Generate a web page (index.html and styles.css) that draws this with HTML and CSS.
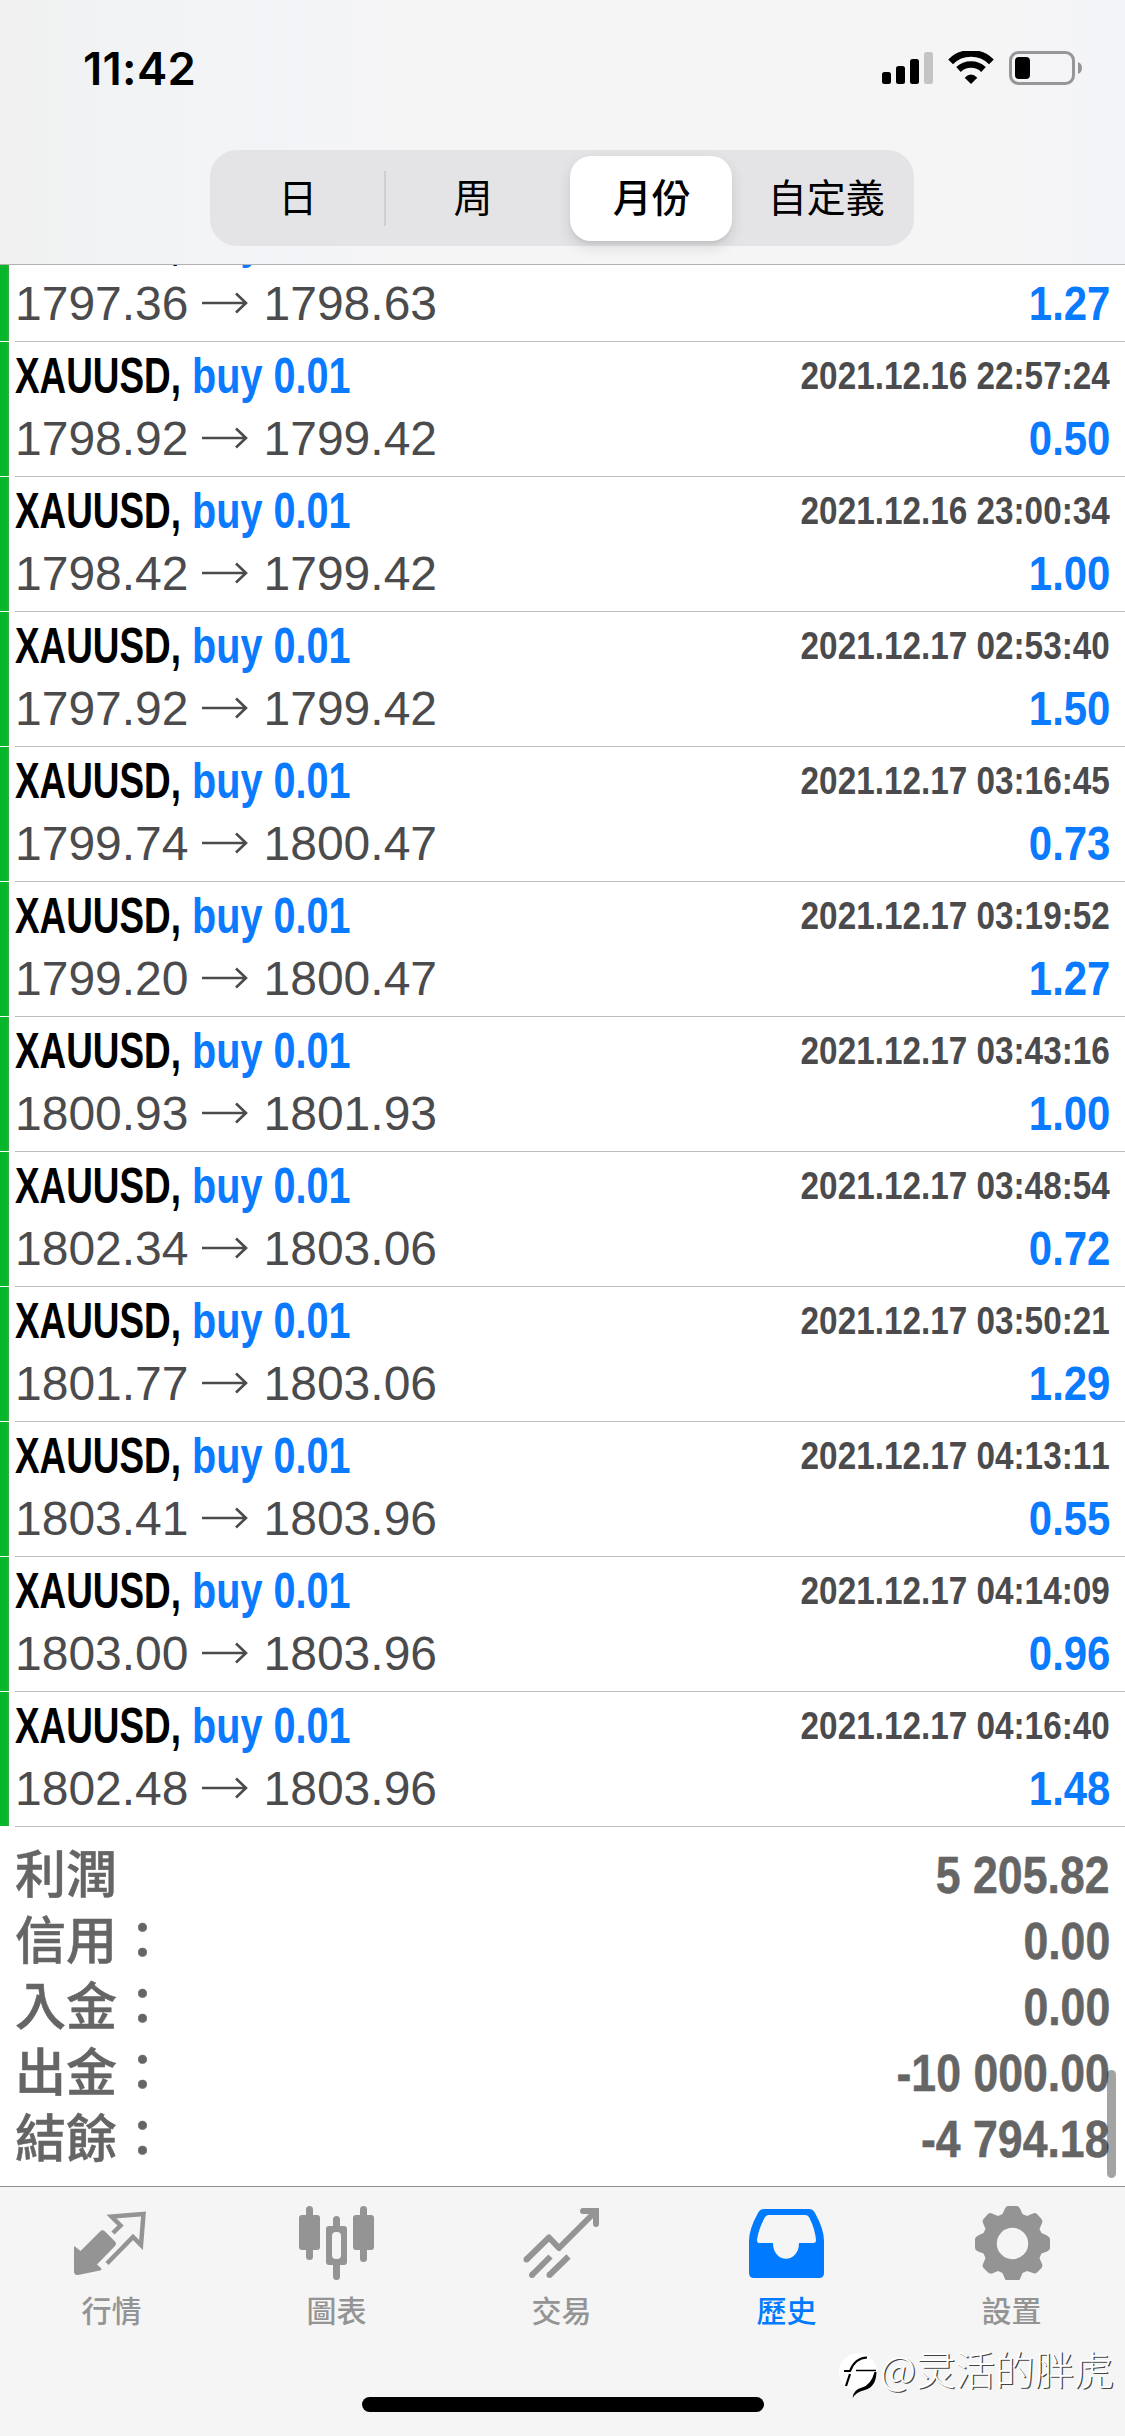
FILE: index.html
```
<!DOCTYPE html>
<html lang="zh-Hant">
<head>
<meta charset="utf-8">
<title>歷史</title>
<link rel="stylesheet" href="styles.css">
</head>
<body>
<header class="header">
  <div class="status">
    <span class="clock">11:42</span>
    <svg class="status-icons" width="204" height="36" viewBox="0 0 204 36">
      <rect x="0" y="21" width="9" height="12" rx="2.5"/>
      <rect x="14" y="15" width="9" height="18" rx="2.5"/>
      <rect x="28" y="8" width="9" height="25" rx="2.5"/>
      <rect x="42" y="1" width="9" height="32" rx="2.5" fill="#c4c4c5"/>
      <path d="M89 33 L82.7 26.7 Q89 20.5 95.3 26.7Z"/>
      <path d="M76.500 18.500 A18.200 18.200 0 0 1 101.500 18.500" fill="none" stroke="#000" stroke-width="6.600"/>
      <path d="M68.600 10.800 A29 29 0 0 1 109.400 10.800" fill="none" stroke="#000" stroke-width="6.800"/>
      <rect x="128.500" y="1.500" width="63" height="31" rx="8" fill="none" stroke="#969698" stroke-width="3"/>
      <rect x="133" y="6" width="15" height="22" rx="4"/>
      <path d="M196 11 Q200 12.500 200 17 Q200 21.500 196 23Z" fill="#969698"/>
    </svg>
  </div>
  <nav class="segments">
    <span class="seg">日</span>
    <span class="seg seg-divided">周</span>
    <span class="seg seg-active">月份</span>
    <span class="seg">自定義</span>
  </nav>
</header>
<main class="history">
  <ul class="deals">
    <li class="deal"><div class="line top"><span class="symbol">XAUUSD,</span><span class="side">buy 0.01</span><span class="date">2021.12.16 22:57:20</span></div><div class="line"><span class="price">1797.36</span><svg class="arrow" viewBox="0 0 46 22"><path d="M0 11H44M34 1.500L44 11L34 20.500"/></svg><span class="price">1798.63</span><span class="profit">1.27</span></div></li>
    <li class="deal"><div class="line top"><span class="symbol">XAUUSD,</span><span class="side">buy 0.01</span><span class="date">2021.12.16 22:57:24</span></div><div class="line"><span class="price">1798.92</span><svg class="arrow" viewBox="0 0 46 22"><path d="M0 11H44M34 1.500L44 11L34 20.500"/></svg><span class="price">1799.42</span><span class="profit">0.50</span></div></li>
    <li class="deal"><div class="line top"><span class="symbol">XAUUSD,</span><span class="side">buy 0.01</span><span class="date">2021.12.16 23:00:34</span></div><div class="line"><span class="price">1798.42</span><svg class="arrow" viewBox="0 0 46 22"><path d="M0 11H44M34 1.500L44 11L34 20.500"/></svg><span class="price">1799.42</span><span class="profit">1.00</span></div></li>
    <li class="deal"><div class="line top"><span class="symbol">XAUUSD,</span><span class="side">buy 0.01</span><span class="date">2021.12.17 02:53:40</span></div><div class="line"><span class="price">1797.92</span><svg class="arrow" viewBox="0 0 46 22"><path d="M0 11H44M34 1.500L44 11L34 20.500"/></svg><span class="price">1799.42</span><span class="profit">1.50</span></div></li>
    <li class="deal"><div class="line top"><span class="symbol">XAUUSD,</span><span class="side">buy 0.01</span><span class="date">2021.12.17 03:16:45</span></div><div class="line"><span class="price">1799.74</span><svg class="arrow" viewBox="0 0 46 22"><path d="M0 11H44M34 1.500L44 11L34 20.500"/></svg><span class="price">1800.47</span><span class="profit">0.73</span></div></li>
    <li class="deal"><div class="line top"><span class="symbol">XAUUSD,</span><span class="side">buy 0.01</span><span class="date">2021.12.17 03:19:52</span></div><div class="line"><span class="price">1799.20</span><svg class="arrow" viewBox="0 0 46 22"><path d="M0 11H44M34 1.500L44 11L34 20.500"/></svg><span class="price">1800.47</span><span class="profit">1.27</span></div></li>
    <li class="deal"><div class="line top"><span class="symbol">XAUUSD,</span><span class="side">buy 0.01</span><span class="date">2021.12.17 03:43:16</span></div><div class="line"><span class="price">1800.93</span><svg class="arrow" viewBox="0 0 46 22"><path d="M0 11H44M34 1.500L44 11L34 20.500"/></svg><span class="price">1801.93</span><span class="profit">1.00</span></div></li>
    <li class="deal"><div class="line top"><span class="symbol">XAUUSD,</span><span class="side">buy 0.01</span><span class="date">2021.12.17 03:48:54</span></div><div class="line"><span class="price">1802.34</span><svg class="arrow" viewBox="0 0 46 22"><path d="M0 11H44M34 1.500L44 11L34 20.500"/></svg><span class="price">1803.06</span><span class="profit">0.72</span></div></li>
    <li class="deal"><div class="line top"><span class="symbol">XAUUSD,</span><span class="side">buy 0.01</span><span class="date">2021.12.17 03:50:21</span></div><div class="line"><span class="price">1801.77</span><svg class="arrow" viewBox="0 0 46 22"><path d="M0 11H44M34 1.500L44 11L34 20.500"/></svg><span class="price">1803.06</span><span class="profit">1.29</span></div></li>
    <li class="deal"><div class="line top"><span class="symbol">XAUUSD,</span><span class="side">buy 0.01</span><span class="date">2021.12.17 04:13:11</span></div><div class="line"><span class="price">1803.41</span><svg class="arrow" viewBox="0 0 46 22"><path d="M0 11H44M34 1.500L44 11L34 20.500"/></svg><span class="price">1803.96</span><span class="profit">0.55</span></div></li>
    <li class="deal"><div class="line top"><span class="symbol">XAUUSD,</span><span class="side">buy 0.01</span><span class="date">2021.12.17 04:14:09</span></div><div class="line"><span class="price">1803.00</span><svg class="arrow" viewBox="0 0 46 22"><path d="M0 11H44M34 1.500L44 11L34 20.500"/></svg><span class="price">1803.96</span><span class="profit">0.96</span></div></li>
    <li class="deal"><div class="line top"><span class="symbol">XAUUSD,</span><span class="side">buy 0.01</span><span class="date">2021.12.17 04:16:40</span></div><div class="line"><span class="price">1802.48</span><svg class="arrow" viewBox="0 0 46 22"><path d="M0 11H44M34 1.500L44 11L34 20.500"/></svg><span class="price">1803.96</span><span class="profit">1.48</span></div></li>
  </ul>
  <section class="summary">
    <div class="sum"><span>利潤</span><span class="amount">5 205.82</span></div>
    <div class="sum"><span>信用：</span><span class="amount">0.00</span></div>
    <div class="sum"><span>入金：</span><span class="amount">0.00</span></div>
    <div class="sum"><span>出金：</span><span class="amount">-10 000.00</span></div>
    <div class="sum"><span>結餘：</span><span class="amount">-4 794.18</span></div>
  </section>
  <i class="scrollbar"></i>
</main>
<footer class="footer">
  <nav class="tabs">
    <div class="tab">
      <svg class="icon" viewBox="0 0 80 80">
        <path d="M2 47 Q2 45.500 3.500 47 L8.500 51 L28 31.500 Q30.500 29 33 31.500 L43 41.500 Q45 43.500 43 46 L25 64.500 L29 68 Q30 70 28 70.500 L6 75 Q2 75.500 2 71Z" fill="currentColor"/>
        <path d="M41 33 L48.500 25.500 L39.500 16.500 L71.500 14 L69 45 L61 37 L35 63.500" fill="none" stroke="currentColor" stroke-width="4.500"/>
      </svg><span>行情</span></div>
    <div class="tab">
      <svg class="icon" viewBox="0 0 80 80">
        <g fill="currentColor"><rect x="9" y="6" width="7" height="54" rx="3.500"/><rect x="2" y="15" width="21" height="35" rx="3"/><rect x="63" y="6" width="7" height="56" rx="3.500"/><rect x="56" y="15" width="21" height="35" rx="3"/><rect x="36" y="16" width="7" height="64" rx="3.500"/><rect x="29" y="26" width="21" height="39" rx="3"/></g><rect x="35" y="32" width="9" height="27" rx="4" fill="#f5f5f5"/>
      </svg><span>圖表</span></div>
    <div class="tab">
      <svg class="icon" viewBox="0 0 80 80">
        <g fill="none" stroke="currentColor" stroke-width="6"><path d="M4.500 59.500 L27 37.500 L37 48 L73 12" stroke-linejoin="round"/><path d="M61 11 H74 V24" stroke-width="6" stroke-linecap="round"/><path d="M10 75 L28.500 56.500M27.500 75 L46.500 56.500"/></g><g fill="currentColor"><circle cx="4.500" cy="59.500" r="3"/><circle cx="10" cy="75" r="3"/><circle cx="27.500" cy="75" r="3"/></g>
      </svg><span>交易</span></div>
    <div class="tab tab-active">
      <svg class="icon" viewBox="0 0 80 80">
        <path fill="currentColor" d="M17 9 H62 Q66 9 68 13 Q77 29 77 41 V73 Q77 78 72 78 H7 Q2 78 2 73 V41 Q2 29 11 13 Q13 9 17 9Z"/>
        <path fill="#f5f5f5" d="M22 15 H58 Q61 15 62.500 18 Q68 29 69 40 Q69 43 66.500 43 H52 C52 64 26 64 26 43 H12 Q10 43 10 40 Q11.500 29 17.500 18 Q19 15 22 15Z"/>
      </svg><span>歷史</span></div>
    <div class="tab">
      <svg class="icon" viewBox="0 0 80 80">
        <path fill="currentColor" d="M36 6 H45 Q47 6 48 8.500 L50.500 14 L55 16 L61 13.500 Q63 12.500 65 14 L69.500 19 Q71 21 70 23 L67.500 29 L69.500 33 L75 35.500 Q78 37 78 39 V48 Q78 50 75 51.500 L69.500 53.500 L67.500 58 L70 64 Q71 66 69.500 68 L65 72.500 Q63 74 61 73 L55 71 L50.500 73 L48 79 Q47 81 45 81 H36 Q34 81 33 79 L30.500 73 L26 71 L20 73.500 Q18 74 16 72.500 L11.500 68 Q10 66 11 64 L13.500 58 L11.500 53.500 L6 51.500 Q3 50 3 48 V39 Q3 37 6 35.500 L11.500 33 L13.500 29 L11 23 Q10 21 11.500 19 L16 14 Q18 12.500 20 13.500 L26 16 L30.500 14 L33 8.500 Q34 6 36 6Z"/><circle cx="40.500" cy="43.500" r="15.700" fill="#f5f5f5"/>
      </svg><span>設置</span></div>
  </nav>
  <div class="home"></div>
  <div class="watermark">
    <svg width="46" height="50" viewBox="0 0 46 50"><circle cx="20" cy="22" r="19" fill="#fff"/><path d="M6 21 H12 Q17 8 29 7.500M12 24 L8 36" fill="none" stroke="#000" stroke-width="2.200"/><path d="M18 20.500 H38" stroke="#000" stroke-width="1.500"/><path d="M38.500 22 Q38 37 27 40 Q18 42 14.500 48 Q15 40 24 37.500 Q33 35 36.500 22Z"/></svg>
    <span>@灵活的胖虎</span>
  </div>
</footer>
</body>
</html>
```
FILE: styles.css
```
* { box-sizing: border-box; }
body {
  margin: 0;
  width: 1125px;
  height: 2436px;
  overflow: hidden;
  display: flex;
  flex-direction: column;
  background: #fff;
  font-family: "Liberation Sans", "Noto Sans CJK TC", sans-serif;
  font-kerning: none;
}
.header {
  height: 265px;
  flex: none;
  border-bottom: 1px solid #b2b2b4;
  background: linear-gradient(90deg, #eff0ef 0, #f2f3f5 130px, #f3f4f7 300px, #f5f5f6 420px, #f5f5f6 1000px, #f3f4f8 1125px);
}
.status {
  height: 150px;
  padding: 0 39px 12px 83px;
  display: flex;
  align-items: center;
  justify-content: space-between;
}
.clock { font: 600 45.5px/50px Inter, sans-serif; letter-spacing: 0.3px; }
.segments {
  width: 704px;
  height: 96px;
  margin-left: 210px;
  border-radius: 27px;
  background: #e4e4e6;
  display: flex;
  align-items: center;
}
.seg {
  flex: 1;
  height: 85px;
  line-height: 85px;
  font-size: 39px;
  text-align: center;
  position: relative;
}
.seg-divided::before {
  content: "";
  position: absolute;
  left: -1px;
  top: 15px;
  width: 2px;
  height: 55px;
  background: #cfcfd1;
}
.seg-active {
  flex: none;
  width: 162px;
  margin: 0 7px 0 9px;
  padding-left: 2px;
  border-radius: 21px;
  background: #fff;
  box-shadow: 0 6px 14px rgba(0,0,0,.12), 0 3px 2px rgba(0,0,0,.04);
  font-weight: 500;
}
.history {
  height: 1921px;
  flex: none;
  position: relative;
  overflow: hidden;
}
.deals {
  margin: -58px 0 0;
  padding: 0;
  list-style: none;
}
.deal {
  height: 135px;
  padding: 3px 15px 0 15px;
  background:
    linear-gradient(#bdbdbf, #bdbdbf) 15px 134px / 1110px 1px no-repeat,
    linear-gradient(90deg, #06b62b 6px, #35ad43 9px) 0 0 / 9px 134px no-repeat;
}
.line {
  display: flex;
  align-items: center;
  height: 64px;
  white-space: nowrap;
  color: #4b4b4d;
}
.top { height: 61px; }
.symbol, .side, .date, .profit { font-weight: 700; flex: none; }
.symbol {
  width: 177px;
  font-size: 49.5px;
  color: #000;
  transform: scaleX(.745);
  transform-origin: 0 50%;
}
.side {
  font-size: 49.5px;
  color: #0a7aff;
  transform: scaleX(.8);
  transform-origin: 0 50%;
}
.date {
  margin-left: auto;
  font-size: 39.5px;
  transform: scaleX(.843);
  transform-origin: 100% 50%;
}
.price { font-size: 48px; }
.arrow {
  width: 46px;
  height: 22px;
  margin: 0 16px 0 13px;
  fill: none;
  stroke: #4b4b4d;
  stroke-width: 2.6;
}
.profit {
  margin-left: auto;
  font-size: 49px;
  color: #0a7aff;
  transform: scaleX(.855);
  transform-origin: 100% 50%;
}
.summary { padding: 16px 15px 0; }
.sum {
  height: 66px;
  display: flex;
  align-items: center;
  justify-content: space-between;
  font-size: 51px;
  line-height: 66px;
  font-weight: 500;
  color: #656565;
  -webkit-text-stroke: 0.5px #656565;
}
.amount {
  font-weight: 700;
  transform: scaleX(.875);
  transform-origin: 100% 50%;
}
.scrollbar {
  position: absolute;
  left: 1107px;
  top: 1805px;
  width: 9px;
  height: 108px;
  border-radius: 5px;
  background: rgba(0,0,0,.36);
}
.footer {
  position: relative;
  height: 250px;
  border-top: 1px solid #8e8e8f;
  background: #f5f5f5;
}
.tabs { display: flex; padding-top: 13px; }
.tab {
  width: 225px;
  display: flex;
  flex-direction: column;
  align-items: center;
  color: #949494;
  font-size: 30px;
  line-height: 40px;
  font-weight: 500;
}
.tab span { margin: 12px 0 0 -2px; }
.tab-active { color: #007aff; }
.icon { width: 80px; height: 80px; margin-left: -1px; }
.home {
  width: 402px;
  height: 15px;
  margin: 65px auto 0;
  border-radius: 8px;
  background: #000;
}
.watermark {
  position: absolute;
  left: 838px;
  top: 163px;
  display: flex;
  align-items: flex-start;
  color: #fff;
  font: 300 39.5px/48px "Noto Sans CJK SC", sans-serif;
  text-shadow: 1.2px 1.2px 0.6px #444;
}
.watermark span { margin: -6px 0 0 -4px; white-space: nowrap; }
```
